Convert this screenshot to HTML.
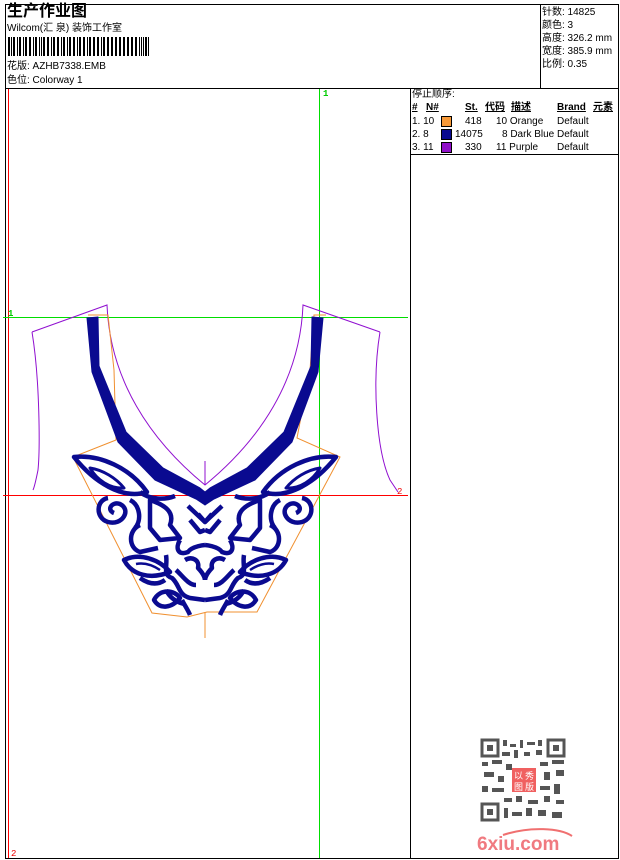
<!DOCTYPE html>
<html><head><meta charset="utf-8"><style>
html,body{margin:0;padding:0;background:#fff;}
body{width:620px;height:860px;position:relative;overflow:hidden;font-family:"Liberation Sans","Noto Sans CJK SC",sans-serif;color:#000;}
.t{position:absolute;font-size:10px;line-height:12px;white-space:nowrap;}
</style></head><body>
<svg width="620" height="860" style="position:absolute;left:0;top:0" xmlns="http://www.w3.org/2000/svg">
<g fill="none" stroke="#000" stroke-width="1" shape-rendering="crispEdges">
<rect x="5.5" y="4.5" width="613" height="854"/>
<line x1="5" y1="88.5" x2="619" y2="88.5"/>
<line x1="540.5" y1="4" x2="540.5" y2="88"/>
<line x1="410.5" y1="88" x2="410.5" y2="859"/>
<line x1="410" y1="154.5" x2="619" y2="154.5"/>
</g>
<g fill="#000">
<rect x="8" y="37" width="2" height="19"/><rect x="11" y="37" width="1" height="19"/><rect x="13" y="37" width="2" height="19"/><rect x="17" y="37" width="1" height="19"/><rect x="19" y="37" width="2" height="19"/><rect x="23" y="37" width="1" height="19"/><rect x="25" y="37" width="2" height="19"/><rect x="29" y="37" width="2" height="19"/><rect x="33" y="37" width="1" height="19"/><rect x="35" y="37" width="2" height="19"/><rect x="39" y="37" width="1" height="19"/><rect x="41" y="37" width="1" height="19"/><rect x="43" y="37" width="2" height="19"/><rect x="47" y="37" width="2" height="19"/><rect x="51" y="37" width="1" height="19"/><rect x="53" y="37" width="2" height="19"/><rect x="57" y="37" width="2" height="19"/><rect x="61" y="37" width="1" height="19"/><rect x="63" y="37" width="2" height="19"/><rect x="67" y="37" width="1" height="19"/><rect x="69" y="37" width="2" height="19"/><rect x="73" y="37" width="2" height="19"/><rect x="77" y="37" width="1" height="19"/><rect x="79" y="37" width="2" height="19"/><rect x="83" y="37" width="2" height="19"/><rect x="87" y="37" width="1" height="19"/><rect x="89" y="37" width="2" height="19"/><rect x="93" y="37" width="2" height="19"/><rect x="97" y="37" width="2" height="19"/><rect x="101" y="37" width="1" height="19"/><rect x="103" y="37" width="2" height="19"/><rect x="107" y="37" width="2" height="19"/><rect x="111" y="37" width="2" height="19"/><rect x="115" y="37" width="2" height="19"/><rect x="119" y="37" width="2" height="19"/><rect x="123" y="37" width="2" height="19"/><rect x="127" y="37" width="2" height="19"/><rect x="131" y="37" width="2" height="19"/><rect x="135" y="37" width="2" height="19"/><rect x="139" y="37" width="1" height="19"/><rect x="141" y="37" width="1" height="19"/><rect x="143" y="37" width="1" height="19"/><rect x="145" y="37" width="2" height="19"/><rect x="148" y="37" width="1" height="19"/>
</g>
<g shape-rendering="crispEdges">
<rect x="8" y="89" width="1" height="769" fill="#f00"/>
<rect x="3" y="495" width="405" height="1" fill="#f00"/>
<rect x="319" y="89" width="1" height="769" fill="#0d0"/>
<rect x="3" y="317" width="405" height="1" fill="#0d0"/>
</g>
<text x="323" y="96" font-size="9" fill="#0c0" font-family="Liberation Mono" font-weight="bold">1</text>
<text x="8" y="316" font-size="9" fill="#0c0" font-family="Liberation Mono" font-weight="bold">1</text>
<text x="397" y="494" font-size="9" fill="#e00" font-family="Liberation Mono">2</text>
<text x="11" y="856" font-size="9" fill="#e00" font-family="Liberation Mono">2</text>
<g fill="none" stroke="#9010d0" stroke-width="1">
<path d="M32,332 L107,305 C110,380 150,440 205,485 C260,440 300,380 303,305 L380,332"/>
<path d="M32,332 C40,380 40,450 38,470 C36,480 34,488 33,490"/>
<path d="M380,332 C372,380 376,450 390,480 L398,492"/>
<line x1="205" y1="461" x2="205" y2="485"/>
</g>
<g fill="none" stroke="#f09030" stroke-width="1">
<path d="M88,315 L108,315 L114,370 L116,440 L73,457 L152,613 L187,617 L207,612 L257,612 L340,457 L297,438 L310,370 L314,315 L326,315"/>
<line x1="205" y1="612" x2="205" y2="638"/>
</g>
<g id="L" fill="none" stroke="#0a0a90" stroke-width="4.5" stroke-linejoin="round">
<path fill="#0a0a90" stroke-width="1" d="M87,318 L98,317 L99,366 L126,432 L163,468 L200,488 L205,492 L205,505 L196,499 L155,480 L118,442 L92,372 Z"/>
<path d="M74,457 C100,454 130,468 147,492 C122,500 94,482 74,457 Z"/>
<path stroke-width="3" d="M90,468 C103,470 116,478 124,488 C110,489 97,480 90,468 Z"/>
<path d="M140,492 C150,500 165,500 175,496"/>
<path d="M108,498 C96,500 95,518 108,522 C122,526 132,510 120,504 C112,501 106,510 114,513"/>
<path d="M130,500 C140,505 142,520 135,528"/>
<path d="M150,500 C165,505 175,512 170,525 L180,538 L160,540 L150,528 Z"/>
<path d="M140,525 C128,530 128,548 140,552 L158,548"/>
<path d="M188,506 L205,522 L212,514"/>
<path d="M190,520 L200,532 L205,530"/>
<path d="M180,540 C175,548 178,556 188,552 C192,546 205,545 205,545"/>
<path d="M166,555 C168,565 162,575 172,578 C180,585 178,595 190,598 L205,600"/>
<path d="M185,560 C192,556 200,560 198,568 C205,575 205,580 205,580"/>
<path d="M176,570 C182,575 188,585 196,585"/>
<path d="M124,560 C140,552 160,560 170,572 C150,580 132,575 124,560 Z"/>
<path stroke-width="2.5" d="M136,564 C146,562 154,566 160,570"/>
<path d="M140,578 C150,585 158,585 165,580"/>
<path d="M154,600 C160,588 175,590 180,598 C172,608 160,610 154,600 Z"/>
<path d="M182,600 C185,606 188,610 190,615"/>
<path d="M166,590 C170,598 176,602 184,604"/>
</g>
<use href="#L" transform="translate(410,0) scale(-1,1)"/>
<g fill="#555">
<rect x="482" y="740" width="16" height="16" fill="none" stroke="#555" stroke-width="3"/>
<rect x="548" y="740" width="16" height="16" fill="none" stroke="#555" stroke-width="3"/>
<rect x="482" y="804" width="16" height="16" fill="none" stroke="#555" stroke-width="3"/>
<rect x="487" y="745" width="6" height="6"/><rect x="553" y="745" width="6" height="6"/><rect x="487" y="809" width="6" height="6"/>
<rect x="503" y="740" width="4" height="6"/><rect x="510" y="744" width="6" height="3"/><rect x="520" y="740" width="3" height="8"/><rect x="527" y="742" width="8" height="3"/><rect x="538" y="740" width="4" height="6"/>
<rect x="502" y="752" width="8" height="4"/><rect x="514" y="750" width="4" height="8"/><rect x="524" y="752" width="6" height="4"/><rect x="536" y="750" width="6" height="5"/>
<rect x="482" y="762" width="6" height="4"/><rect x="492" y="760" width="10" height="4"/><rect x="506" y="764" width="6" height="6"/><rect x="540" y="762" width="8" height="4"/><rect x="552" y="760" width="12" height="4"/>
<rect x="484" y="772" width="10" height="5"/><rect x="498" y="776" width="6" height="6"/><rect x="544" y="772" width="6" height="8"/><rect x="556" y="770" width="8" height="6"/>
<rect x="482" y="786" width="6" height="6"/><rect x="492" y="788" width="12" height="4"/><rect x="540" y="786" width="10" height="4"/><rect x="554" y="784" width="6" height="10"/>
<rect x="504" y="798" width="8" height="4"/><rect x="516" y="796" width="6" height="6"/><rect x="528" y="800" width="10" height="4"/><rect x="544" y="796" width="6" height="6"/><rect x="556" y="800" width="8" height="4"/>
<rect x="504" y="808" width="4" height="10"/><rect x="512" y="812" width="10" height="4"/><rect x="526" y="808" width="6" height="8"/><rect x="538" y="810" width="8" height="6"/><rect x="552" y="812" width="10" height="6"/>
</g>
<rect x="512" y="768" width="24" height="24" fill="#f06060"/>
<text x="514" y="779" font-size="9" fill="#fff" font-family="Noto Sans CJK SC">以 秀</text>
<text x="514" y="790" font-size="9" fill="#fff" font-family="Noto Sans CJK SC">图 版</text>
<path d="M503,835 C530,826 560,828 572,836" fill="none" stroke="#f07070" stroke-width="2"/>
<text x="477" y="850" font-size="19" font-weight="bold" fill="#f07a80" font-family="Liberation Sans">6xiu.com</text>
</svg>
<div class="t" style="left:7px;top:2px;font-size:16px;line-height:19px;font-weight:bold;">生产作业图</div>
<div class="t" style="left:7px;top:23px;">Wilcom(汇 泉) 装饰工作室</div>
<div class="t" style="left:7px;top:61px;">花版: AZHB7338.EMB</div>
<div class="t" style="left:7px;top:75px;">色位: Colorway 1</div>
<div class="t" style="left:542px;top:6px;line-height:13px;">针数: 14825<br>颜色: 3<br>高度: 326.2 mm<br>宽度: 385.9 mm<br>比例: 0.35</div>
<div class="t" style="left:412px;top:89px;">停止顺序:</div>
<div class="t" style="left:412px;top:102px;font-weight:bold;text-decoration:underline;">#</div>
<div class="t" style="left:426px;top:102px;font-weight:bold;text-decoration:underline;">N#</div>
<div class="t" style="left:465px;top:102px;font-weight:bold;text-decoration:underline;">St.</div>
<div class="t" style="left:485px;top:102px;font-weight:bold;text-decoration:underline;">代码</div>
<div class="t" style="left:511px;top:102px;font-weight:bold;text-decoration:underline;">描述</div>
<div class="t" style="left:557px;top:102px;font-weight:bold;text-decoration:underline;">Brand</div>
<div class="t" style="left:593px;top:102px;font-weight:bold;text-decoration:underline;">元素</div>
<div class="t" style="left:412px;top:116px;">1. 10</div><div style="position:absolute;left:441px;top:116px;width:9px;height:9px;background:#f89a38;border:1px solid #000"></div><div class="t" style="left:465px;top:116px;">418</div><div class="t" style="left:496px;top:116px;">10 Orange</div><div class="t" style="left:557px;top:116px;">Default</div>
<div class="t" style="left:412px;top:129px;">2. 8</div><div style="position:absolute;left:441px;top:129px;width:9px;height:9px;background:#0a0a90;border:1px solid #000"></div><div class="t" style="left:455px;top:129px;">14075</div><div class="t" style="left:502px;top:129px;">8 Dark Blue</div><div class="t" style="left:557px;top:129px;">Default</div>
<div class="t" style="left:412px;top:142px;">3. 11</div><div style="position:absolute;left:441px;top:142px;width:9px;height:9px;background:#9010c8;border:1px solid #000"></div><div class="t" style="left:465px;top:142px;">330</div><div class="t" style="left:496px;top:142px;">11 Purple</div><div class="t" style="left:557px;top:142px;">Default</div>
</body></html>
